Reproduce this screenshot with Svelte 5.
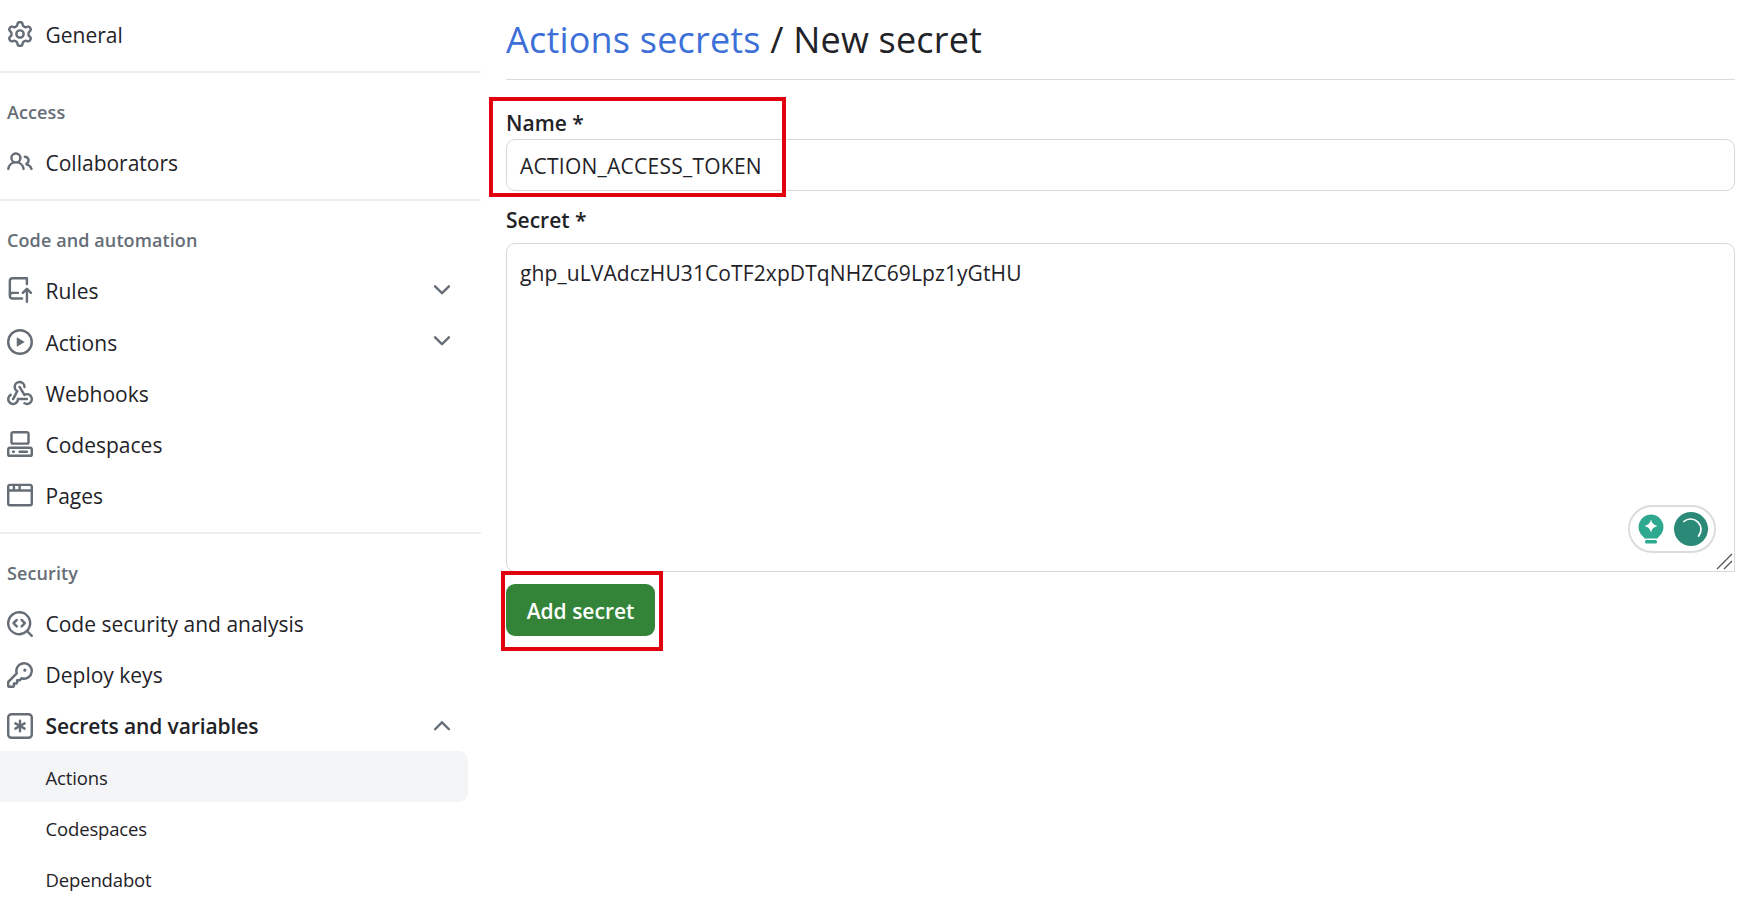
<script>
  const P = {
    gear: ["M8 0a8.2 8.2 0 0 1 .701.031C9.444.095 9.99.645 10.16 1.29l.288 1.107c.018.066.079.158.212.224.231.114.454.243.668.386.123.082.233.09.299.071l1.103-.303c.644-.176 1.392.021 1.82.63.27.385.506.792.704 1.218.315.675.111 1.422-.364 1.891l-.814.806c-.049.048-.098.147-.088.294.016.257.016.515 0 .772-.01.147.038.246.088.294l.814.806c.475.469.679 1.216.364 1.891a7.977 7.977 0 0 1-.704 1.217c-.428.61-1.176.807-1.82.63l-1.102-.302c-.067-.019-.177-.011-.3.071a5.909 5.909 0 0 1-.668.386c-.133.066-.194.158-.211.224l-.29 1.106c-.168.646-.715 1.196-1.458 1.26a8.006 8.006 0 0 1-1.402 0c-.743-.064-1.289-.614-1.458-1.26l-.289-1.106c-.018-.066-.079-.158-.212-.224a5.738 5.738 0 0 1-.668-.386c-.123-.082-.233-.09-.299-.071l-1.103.303c-.644.176-1.392-.021-1.82-.63a8.12 8.12 0 0 1-.704-1.218c-.315-.675-.111-1.422.363-1.891l.815-.806c.05-.048.098-.147.088-.294a6.214 6.214 0 0 1 0-.772c.01-.147-.038-.246-.088-.294l-.815-.806C.635 6.045.431 5.298.746 4.623a7.92 7.92 0 0 1 .704-1.217c.428-.61 1.176-.807 1.82-.63l1.102.302c.067.019.177.011.3-.071.214-.143.437-.272.668-.386.133-.066.194-.158.211-.224l.29-1.106C6.009.645 6.556.095 7.299.03 7.53.01 7.764 0 8 0Zm-.571 1.525c-.036.003-.108.036-.137.146l-.289 1.105c-.147.561-.549.967-.998 1.189-.173.086-.34.183-.5.29-.417.278-.97.423-1.529.27l-1.103-.303c-.109-.03-.175.016-.195.045-.22.312-.412.644-.573.99-.014.031-.021.11.059.19l.815.806c.411.406.562.957.53 1.456a4.709 4.709 0 0 0 0 .582c.032.499-.119 1.05-.53 1.456l-.815.806c-.081.08-.073.159-.059.19.162.346.353.677.573.989.02.03.085.076.195.046l1.102-.303c.56-.153 1.113-.008 1.53.27.161.107.328.204.501.29.447.222.85.629.997 1.189l.289 1.105c.029.109.101.143.137.146a6.6 6.6 0 0 0 1.142 0c.036-.003.108-.036.137-.146l.289-1.105c.147-.561.549-.967.998-1.189.173-.086.34-.183.5-.29.417-.278.97-.423 1.529-.27l1.103.303c.109.029.175-.016.195-.045.22-.313.411-.644.573-.99.014-.031.021-.11-.059-.19l-.815-.806c-.411-.406-.562-.957-.53-1.456a4.709 4.709 0 0 0 0-.582c-.032-.499.119-1.05.53-1.456l.815-.806c.081-.08.073-.159.059-.19a6.464 6.464 0 0 0-.573-.989c-.02-.03-.085-.076-.195-.046l-1.102.303c-.56.153-1.113.008-1.53-.27a4.44 4.44 0 0 0-.501-.29c-.447-.222-.85-.629-.997-1.189l-.289-1.105c-.029-.11-.101-.143-.137-.146a6.6 6.6 0 0 0-1.142 0ZM11 8a3 3 0 1 1-6 0 3 3 0 0 1 6 0ZM9.5 8a1.5 1.5 0 1 0-3.001.001A1.5 1.5 0 0 0 9.5 8Z"],
    people: ["M2 5.5a3.5 3.5 0 1 1 5.898 2.549 5.508 5.508 0 0 1 3.034 4.084.75.75 0 1 1-1.482.235 4 4 0 0 0-7.9 0 .75.75 0 0 1-1.482-.236A5.507 5.507 0 0 1 3.102 8.05 3.493 3.493 0 0 1 2 5.5ZM11 4a3.001 3.001 0 0 1 2.22 5.018 5.01 5.01 0 0 1 2.56 3.012.749.749 0 0 1-.885.954.752.752 0 0 1-.549-.514 3.507 3.507 0 0 0-2.522-2.372.75.75 0 0 1-.574-.73v-.352a.75.75 0 0 1 .416-.672A1.5 1.5 0 0 0 11 5.5.75.75 0 0 1 11 4Zm-5.5-.5a2 2 0 1 0-.001 3.999A2 2 0 0 0 5.5 3.5Z"],
    push: ["M1 2.5A2.5 2.5 0 0 1 3.5 0h8.75a.75.75 0 0 1 .75.75v3.5a.75.75 0 0 1-1.5 0V1.5h-8a1 1 0 0 0-1 1v6.708A2.493 2.493 0 0 1 3.5 9h3.25a.75.75 0 0 1 0 1.5H3.5a1 1 0 0 0 0 2h5.75a.75.75 0 0 1 0 1.5H3.5A2.5 2.5 0 0 1 1 11.5Zm13.23 7.79h-.001l-1.224-1.224v6.184a.75.75 0 0 1-1.5 0V9.066L10.28 10.29a.75.75 0 0 1-1.06-1.061l2.505-2.504a.75.75 0 0 1 1.06 0L15.29 9.23a.751.751 0 0 1-.018 1.042.751.751 0 0 1-1.042.018Z"],
    play: ["M8 0a8 8 0 1 1 0 16A8 8 0 0 1 8 0ZM1.5 8a6.5 6.5 0 1 0 13 0 6.5 6.5 0 0 0-13 0Zm4.879-2.773 4.264 2.559a.25.25 0 0 1 0 .428l-4.264 2.559A.25.25 0 0 1 6 10.559V5.442a.25.25 0 0 1 .379-.215Z"],
    webhook: ["M5.5 4.25a2.25 2.25 0 0 1 4.5 0 .75.75 0 0 0 1.5 0 3.75 3.75 0 1 0-6.14 2.889l-2.272 4.258a.75.75 0 0 0 1.324.706L7 7.25a.75.75 0 0 0-.309-1.015A2.25 2.25 0 0 1 5.5 4.25Z","M7.364 3.607a.75.75 0 0 1 1.03.257l2.608 4.349a3.75 3.75 0 1 1-.628 6.785.75.75 0 0 1 .752-1.299 2.25 2.25 0 1 0-.033-3.88.75.75 0 0 1-1.03-.256L7.107 4.636a.75.75 0 0 1 .257-1.03Z","M2.9 8.776A.75.75 0 0 1 2.625 9.8 2.25 2.25 0 1 0 6 11.75a.75.75 0 0 1 .75-.751h5.5a.75.75 0 0 1 0 1.5H7.425a3.751 3.751 0 1 1-5.55-3.998.75.75 0 0 1 1.024.274Z"],
    codespaces: ["M0 11.25c0-.966.784-1.75 1.75-1.75h12.5c.966 0 1.75.784 1.75 1.75v3A1.75 1.75 0 0 1 14.25 16H1.75A1.75 1.75 0 0 1 0 14.25Zm2-9.5C2 .784 2.784 0 3.75 0h8.5C13.216 0 14 .784 14 1.75v5a1.75 1.75 0 0 1-1.75 1.75h-8.5A1.75 1.75 0 0 1 2 6.75Zm1.75-.25a.25.25 0 0 0-.25.25v5c0 .138.112.25.25.25h8.5a.25.25 0 0 0 .25-.25v-5a.25.25 0 0 0-.25-.25Zm-2 9.5a.25.25 0 0 0-.25.25v3c0 .138.112.25.25.25h12.5a.25.25 0 0 0 .25-.25v-3a.25.25 0 0 0-.25-.25Z","M7 12.75a.75.75 0 0 1 .75-.75h4.5a.75.75 0 0 1 0 1.5h-4.5a.75.75 0 0 1-.75-.75Zm-4 0a.75.75 0 0 1 .75-.75h.5a.75.75 0 0 1 0 1.5h-.5a.75.75 0 0 1-.75-.75Z"],
    browser: ["M0 2.75C0 1.784.784 1 1.75 1h12.5c.966 0 1.75.784 1.75 1.75v10.5A1.75 1.75 0 0 1 14.25 15H1.75A1.75 1.75 0 0 1 0 13.25ZM14.5 6h-13v7.25c0 .138.112.25.25.25h12.5a.25.25 0 0 0 .25-.25Zm-6-3.5v2h6v-1.75a.25.25 0 0 0-.25-.25ZM5 2.5v2h2v-2Zm-3.25 0a.25.25 0 0 0-.25.25V4.5h2v-2Z"],
    codescan: ["M8.47 4.97a.75.75 0 0 0 0 1.06L9.94 7.5 8.47 8.97a.75.75 0 1 0 1.06 1.06l2-2a.75.75 0 0 0 0-1.06l-2-2a.75.75 0 0 0-1.06 0ZM6.53 6.03a.75.75 0 0 0-1.06-1.06l-2 2a.75.75 0 0 0 0 1.06l2 2a.75.75 0 1 0 1.06-1.06L5.06 7.5l1.47-1.47Z","M12.246 13.307a7.501 7.501 0 1 1 1.06-1.06l2.474 2.473a.749.749 0 0 1-.326 1.275.749.749 0 0 1-.734-.215ZM1.5 7.5a6.002 6.002 0 0 0 3.608 5.504 6.002 6.002 0 0 0 6.486-1.117.748.748 0 0 1 .293-.293A6 6 0 1 0 1.5 7.5Z"],
    key: ["M10.5 0a5.499 5.499 0 1 1-1.288 10.848l-.932.932a.749.749 0 0 1-.53.22H7v.75a.749.749 0 0 1-.22.53l-.5.5a.749.749 0 0 1-.53.22H5v.75a.749.749 0 0 1-.22.53l-.5.5a.749.749 0 0 1-.53.22h-2A1.75 1.75 0 0 1 0 14.25v-2c0-.199.079-.389.22-.53l4.932-4.932A5.5 5.5 0 0 1 10.5 0Zm-4 5.5c-.001.431.069.86.205 1.269a.75.75 0 0 1-.181.768L1.5 12.56v1.69c0 .138.112.25.25.25h1.69l.06-.06v-1.19a.75.75 0 0 1 .75-.75h1.19l.06-.06v-1.19a.75.75 0 0 1 .75-.75h1.19l1.023-1.025a.75.75 0 0 1 .768-.18A4 4 0 1 0 6.5 5.5ZM11 6a1 1 0 1 1 0-2 1 1 0 0 1 0 2Z"],
    asterisk: ["M0 2.75A2.75 2.75 0 0 1 2.75 0h10.5A2.75 2.75 0 0 1 16 2.75v10.5A2.75 2.75 0 0 1 13.25 16H2.75A2.75 2.75 0 0 1 0 13.25ZM2.75 1.5c-.69 0-1.25.56-1.25 1.25v10.5c0 .69.56 1.25 1.25 1.25h10.5c.69 0 1.25-.56 1.25-1.25V2.75c0-.69-.56-1.25-1.25-1.25Z","M8 4a.75.75 0 0 1 .75.75V6.7l1.69-.975a.75.75 0 0 1 .75 1.3L9.5 8l1.69.976a.75.75 0 0 1-.75 1.298L8.75 9.3v1.951a.75.75 0 0 1-1.5 0V9.299l-1.69.976a.75.75 0 0 1-.75-1.3L6.5 8l-1.69-.975a.75.75 0 0 1 .75-1.3l1.69.976V4.75A.75.75 0 0 1 8 4Z"],
    down: ["M12.78 5.22a.749.749 0 0 1 0 1.06l-4.25 4.25a.749.749 0 0 1-1.06 0L3.22 6.28a.749.749 0 1 1 1.06-1.06L8 8.939l3.72-3.719a.749.749 0 0 1 1.06 0Z"],
    up: ["M3.22 10.53a.749.749 0 0 1 0-1.06l4.25-4.25a.749.749 0 0 1 1.06 0l4.25 4.25a.749.749 0 1 1-1.06 1.06L8 6.811 4.28 10.53a.749.749 0 0 1-1.06 0Z"]
  };
  const sections = [
    { items: [{ icon: 'gear', label: 'General' }] },
    { title: 'Access', items: [{ icon: 'people', label: 'Collaborators' }] },
    { title: 'Code and automation', items: [
      { icon: 'push', label: 'Rules', chev: 'down' },
      { icon: 'play', label: 'Actions', chev: 'down' },
      { icon: 'webhook', label: 'Webhooks' },
      { icon: 'codespaces', label: 'Codespaces' },
      { icon: 'browser', label: 'Pages' }
    ] },
    { title: 'Security', items: [
      { icon: 'codescan', label: 'Code security and analysis' },
      { icon: 'key', label: 'Deploy keys' },
      { icon: 'asterisk', label: 'Secrets and variables', chev: 'up', strong: true },
      { label: 'Actions', sub: true, active: true },
      { label: 'Codespaces', sub: true },
      { label: 'Dependabot', sub: true }
    ] }
  ];
</script>

{#snippet octicon(name, cls)}
  <svg class={cls} viewBox="0 0 16 16" aria-hidden="true">
    {#each P[name] as d}<path {d} />{/each}
  </svg>
{/snippet}

<div class="page">
  <aside class="side">
    {#each sections as s, i}
      <section class="group" class:ruled={i < sections.length - 1}>
        {#if s.title}<h3 class="heading">{s.title}</h3>{/if}
        {#each s.items as it}
          <div class="item" class:sub={it.sub} class:active={it.active} class:strong={it.strong} class:early={i < 3}>
            {#if it.icon}{@render octicon(it.icon, 'icon')}{/if}
            <span class="label">{it.label}</span>
            {#if it.chev}{@render octicon(it.chev, 'chev')}{/if}
          </div>
        {/each}
      </section>
    {/each}
  </aside>

  <main class="main">
    <h1 class="title"><span class="link">Actions secrets</span> / New secret</h1>
    <form class="form">
      <div class="name-field">
        <label class="field-label name-label" for="n">Name *</label>
        <div id="n" class="input">ACTION_ACCESS_TOKEN</div>
        <div class="mark mark-name"></div>
      </div>
      <label class="field-label secret-label" for="s">Secret *</label>
      <div id="s" class="textarea">
        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
        <div class="pill">
          <svg class="bulb" viewBox="0 0 26 30">
            <path d="M13 .5a12.500 12.500 0 0 0-7.800 22.200c.8.7 1.200 1.200 1.300 1.800h13c.1-.6.500-1.100 1.300-1.800A12.500 12.500 0 0 0 13 .5Z" fill="#2fa890" />
            <path d="M13 5.500c1 3.800 2.700 5.500 6.500 6.500-3.800 1-5.500 2.700-6.500 6.500-1-3.800-2.700-5.500-6.500-6.500 3.800-1 5.500-2.700 6.500-6.500Z" fill="#fff" />
            <rect x="7" y="26" width="12" height="3.500" rx="1.500" fill="#2fa890" />
          </svg>
          <svg class="spin" viewBox="0 0 36 36">
            <circle cx="18" cy="18" r="18" fill="#2b8a77" />
            <path d="M10.500 10A11 11 0 0 1 26 25.500" fill="none" stroke="#fff" stroke-width="1.800" stroke-linecap="round" />
          </svg>
        </div>
        <svg class="grip" viewBox="0 0 18 18">
          <path d="M2 17 17 2M9 17l8-8" stroke="#555" stroke-width="1.300" fill="none" />
        </svg>
      </div>
      <div class="btn-wrap">
        <button class="btn" type="button">Add secret</button>
        <div class="mark mark-btn"></div>
      </div>
    </form>
  </main>
</div>

<style>
  :global(body) { margin: 0; background: #fff; }
  .page {
    display: flex;
    height: 904px;
    overflow: hidden;
    font-family: "Open Sans", "Noto Sans", sans-serif;
    color: #1f2328;
    background: #fff;
  }
  .side { width: 481px; flex: none; padding-top: 8.5px; box-sizing: border-box; }
  .group { padding-bottom: 11px; }
  .group + .group { padding-top: 24px; }
  .group:last-child { padding-top: 24.5px; }
  .ruled { border-bottom: 2px solid #ebedef; }
  .heading {
    margin: 0 0 10px 7px;
    height: 30px;
    line-height: 30px;
    font-size: 18px;
    font-weight: 600;
    color: #656d76;
    letter-spacing: 0.1px;
  }
  .item {
    display: flex;
    align-items: center;
    height: 51.2px;
    width: 468px;
    padding-left: 7px;
    box-sizing: border-box;
    font-size: 21px;
    border-radius: 0 9px 9px 0;
  }
  .early .label { padding-top: 2px; }
  .icon { width: 26px; height: 26px; fill: #656d76; flex: none; margin-right: 12.5px; }
  .chev { width: 26px; height: 26px; fill: #656d76; flex: none; margin-left: auto; margin-right: 13px; margin-top: -1px; }
  .strong { font-weight: 600; letter-spacing: -0.1px; }
  .sub { padding-left: 45.5px; font-size: 18.5px; letter-spacing: -0.15px; }
  .active { background: #f4f5f7; margin-top: -1px; margin-bottom: 1px; padding-top: 2px; }

  .main { flex: none; width: 1229px; margin-left: 25px; }
  .title {
    margin: 0;
    height: 79px;
    box-sizing: content-box;
    border-bottom: 1px solid #d8dbdf;
    font-size: 36px;
    line-height: 80px;
    font-weight: 400;
    letter-spacing: 0.2px;
  }
  .link { color: #3d6fd8; }
  .form { display: flex; flex-direction: column; }
  .name-field { position: relative; padding-top: 26px; }
  .field-label {
    display: block;
    height: 33px;
    line-height: 33px;
    font-size: 21px;
    font-weight: 600;
  }
  .name-label { line-height: 35px; }
  .input, .textarea {
    box-sizing: border-box;
    border: 1.5px solid #d6d8db;
    border-radius: 9px;
    padding-left: 13px;
    font-size: 21px;
  }
  .input { height: 52px; line-height: 53px; letter-spacing: 0.25px; }
  .secret-label { margin-top: 13px; }
  .textarea {
    position: relative;
    height: 329px;
    margin-top: 6px;
    padding-top: 14.5px;
    line-height: 28px;
    letter-spacing: 0.1px;
    border-bottom-right-radius: 0;
  }
  .pill {
    position: absolute;
    right: 18px;
    bottom: 18px;
    width: 88px;
    height: 48px;
    box-sizing: border-box;
    border: 2px solid #dcdcdf;
    border-radius: 24px;
    display: flex;
    align-items: center;
    padding-left: 8px;
    gap: 10px;
  }
  .bulb { width: 26px; height: 30px; flex: none; }
  .spin { width: 34px; height: 34px; flex: none; }
  .grip { position: absolute; right: 1px; bottom: 1px; width: 18px; height: 18px; }
  .btn-wrap { position: relative; margin-top: 12px; width: 149px; }
  .btn {
    display: block;
    width: 149px;
    height: 52px;
    border: 0;
    border-radius: 9px;
    background: #338438;
    color: #fff;
    font: 600 21px "Open Sans", "Noto Sans", sans-serif;
    padding: 2px 0 0;
  }
  .mark { position: absolute; border: 4px solid #e2000f; box-sizing: border-box; pointer-events: none; }
  .mark-name { left: -17px; top: 17px; width: 297px; height: 100px; }
  .mark-btn { left: -5px; top: -13px; width: 162px; height: 80px; }
</style>
